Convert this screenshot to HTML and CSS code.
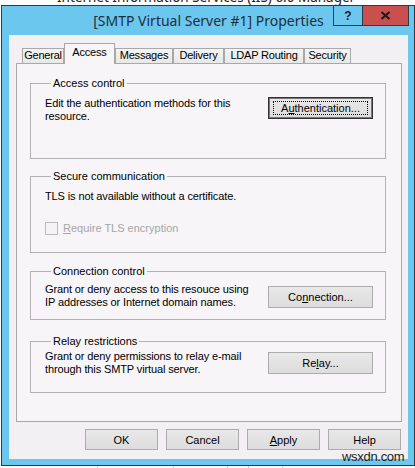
FILE: index.html
```html
<!DOCTYPE html>
<html>
<head>
<meta charset="utf-8">
<title>[SMTP Virtual Server #1] Properties</title>
<link rel="stylesheet" href="styles.css">
</head>
<body>
<div class="bg-title"><span>Internet Information Services (IIS) 6.0 Manager</span></div>
<div class="window">
  <div class="titlebar">
    <div class="title">[SMTP Virtual Server #1] Properties</div>
    <div class="caption">
      <span class="cap cap-help">?</span>
      <span class="cap cap-close"><svg width="11" height="9" viewBox="0 0 11 9"><path d="M1.5 1 L9.5 8 M9.5 1 L1.5 8" stroke="#1c1c1c" stroke-width="2.2" fill="none"/></svg></span>
    </div>
  </div>
  <div class="client">
    <div class="tabs">
      <div class="tab tab-general">General</div>
      <div class="tab tab-access active">Access</div>
      <div class="tab tab-messages">Messages</div>
      <div class="tab tab-delivery">Delivery</div>
      <div class="tab tab-ldap">LDAP Routing</div>
      <div class="tab tab-security">Security</div>
    </div>
    <div class="panel">
      <div class="group g1">
        <div class="legend">Access control</div>
        <div class="row">
          <div class="desc">Edit the authentication methods for this<br>resource.</div>
          <button class="btn btn-side btn-default"><span class="focus">A<u>u</u>thentication...</span></button>
        </div>
      </div>
      <div class="group g2">
        <div class="legend">Secure communication</div>
        <div class="desc">TLS is not available without a certificate.</div>
        <div class="check"><span class="box"></span><span><u>R</u>equire TLS encryption</span></div>
      </div>
      <div class="group g3">
        <div class="legend">Connection control</div>
        <div class="row">
          <div class="desc">Grant or deny access to this resouce using<br>IP addresses or Internet domain names.</div>
          <button class="btn btn-side">Co<u>n</u>nection...</button>
        </div>
      </div>
      <div class="group g4">
        <div class="legend">Relay restrictions</div>
        <div class="row">
          <div class="desc">Grant or deny permissions to relay e-mail<br>through this SMTP virtual server.</div>
          <button class="btn btn-side">Re<u>l</u>ay...</button>
        </div>
      </div>
    </div>
    <div class="actions">
      <button class="btn btn-act">OK</button>
      <button class="btn btn-act">Cancel</button>
      <button class="btn btn-act"><u>A</u>pply</button>
      <button class="btn btn-act">Help</button>
    </div>
  </div>
</div>
<div class="below"></div>
<div class="watermark">wsxdn.com</div>
</body>
</html>
```

FILE: styles.css
```css
html, body {
  margin: 0;
  padding: 0;
}
body {
  width: 415px;
  height: 468px;
  overflow: hidden;
  background: #ffffff;
  font-family: "Liberation Sans", Arial, sans-serif;
  font-size: 11px;
  color: #000;
  position: relative;
}

.bg-title {
  height: 5px;
  overflow: hidden;
}
.bg-title span {
  display: block;
  margin-top: -11px;
  padding-left: 57px;
  font-family: "Noto Sans", sans-serif;
  font-size: 13.5px;
  line-height: 16px;
  color: #222;
  white-space: nowrap;
}

.window {
  margin-left: 1px;
  width: 414px;
  height: 461px;
  box-sizing: border-box;
  border: 1px solid #2b3a47;
  background: #6cc7ee;
  padding: 0 6px 6px 7px;
  position: relative;
}

.titlebar {
  height: 29px;
  display: flex;
  align-items: center;
  justify-content: center;
}
.title {
  font-family: "Noto Sans", sans-serif;
  font-size: 14px;
  color: #1d2d3d;
  white-space: nowrap;
}
.caption {
  position: absolute;
  top: 0;
  right: 5px;
  display: flex;
}
.cap {
  height: 20px;
  box-sizing: border-box;
  display: flex;
  align-items: center;
  justify-content: center;
}
.cap-help {
  width: 29px;
  border-left: 1px solid #2b3a47;
  border-bottom: 1px solid #2b3a47;
  font-family: "Liberation Sans", sans-serif;
  font-weight: bold;
  font-size: 12px;
  color: #1c1c1c;
}
.cap-close {
  width: 47px;
  border: 1px solid #2b3a47;
  border-top: none;
  background: #c9504f;
}

.client {
  height: 424px;
  box-sizing: border-box;
  background: #f2f0f2;
  padding: 8px 6px 9px 7px;
}

.tabs {
  display: flex;
  align-items: flex-end;
  height: 20px;
  margin-left: 6px;
  position: relative;
  z-index: 1;
}
.tab {
  height: 15px;
  box-sizing: border-box;
  border: 1px solid #a8a8a8;
  border-bottom: none;
  background: linear-gradient(#f4f4f4, #e8e8e8);
  text-align: center;
  line-height: 13px;
  white-space: nowrap;
  letter-spacing: -0.2px;
}
.tab.active {
  height: 21px;
  margin-bottom: -1px;
  padding-top: 2px;
  background: #f7f5f7;
}
.tab-general { width: 42px; }
.tab-access { width: 51px; }
.tab-messages { width: 58px; }
.tab-delivery { width: 51px; }
.tab-ldap { width: 80px; }
.tab-security { width: 47px; }

.panel {
  height: 359px;
  box-sizing: border-box;
  border: 1px solid #a8a8a8;
  background: #f7f5f7;
  padding: 19px 0 0 13px;
}

.group {
  width: 356px;
  box-sizing: border-box;
  border: 1px solid #b2b2b2;
  padding: 0 12px 0 14px;
}
.g1 { height: 76px; }
.g2 { height: 77px; margin-top: 17px; }
.g3 { height: 49px; margin-top: 18px; }
.g4 { height: 52px; margin-top: 21px; }

.legend {
  display: table;
  margin: -7px 0 0 6px;
  padding: 0 2px;
  background: #f7f5f7;
  line-height: 13px;
}

.desc {
  line-height: 13px;
  white-space: nowrap;
  letter-spacing: -0.12px;
}

.row {
  display: flex;
  justify-content: space-between;
  align-items: flex-start;
}
.g1 .row { margin-top: 7px; }
.g1 .desc { margin-top: 0; }
.g2 .desc { margin-top: 7px; }
.g3 .row { margin-top: 5px; }
.g3 .btn { margin-top: 3px; }
.g4 .row { margin-top: 2px; }
.g4 .btn { margin-top: 2px; }

.check {
  display: flex;
  align-items: center;
  gap: 5px;
  margin-top: 19px;
  color: #a6a6a6;
  line-height: 13px;
}
.box {
  width: 13px;
  height: 13px;
  box-sizing: border-box;
  border: 1px solid #bcbcbc;
  background: #f4f4f4;
}

.btn {
  box-sizing: border-box;
  border: 1px solid #acacac;
  background: linear-gradient(#e8e8e8, #dddddd);
  font-family: inherit;
  font-size: 11px;
  color: #000;
  padding: 0;
  margin: 0;
  display: flex;
  align-items: center;
  justify-content: center;
}
.btn-side {
  width: 105px;
  height: 22px;
}
.btn-default {
  border: 1px solid #333;
  box-shadow: inset 0 0 0 1px #777;
  padding: 3px 4px;
}
.focus {
  flex: 1;
  align-self: stretch;
  border: 1px dotted #000;
  display: flex;
  align-items: center;
  justify-content: center;
}

.actions {
  display: flex;
  justify-content: flex-end;
  gap: 8px;
  margin-top: 7px;
  padding-right: 1px;
}
.btn-act {
  width: 73px;
  height: 21px;
}

.below {
  height: 2px;
  background-image:
    linear-gradient(#c4c4c4, #c4c4c4),
    linear-gradient(#c4c4c4, #c4c4c4),
    linear-gradient(#c4c4c4, #c4c4c4),
    linear-gradient(#c4c4c4, #c4c4c4),
    linear-gradient(#c4c4c4, #c4c4c4);
  background-size: 1px 2px;
  background-repeat: no-repeat;
  background-position: 97px 0, 173px 0, 227px 0, 248px 0, 282px 0;
}

.watermark {
  position: absolute;
  left: 342px;
  top: 450px;
  font-family: "Liberation Sans", Arial, sans-serif;
  font-size: 13px;
  line-height: 14px;
  letter-spacing: -0.3px;
  color: #1e1e1e;
}
```
